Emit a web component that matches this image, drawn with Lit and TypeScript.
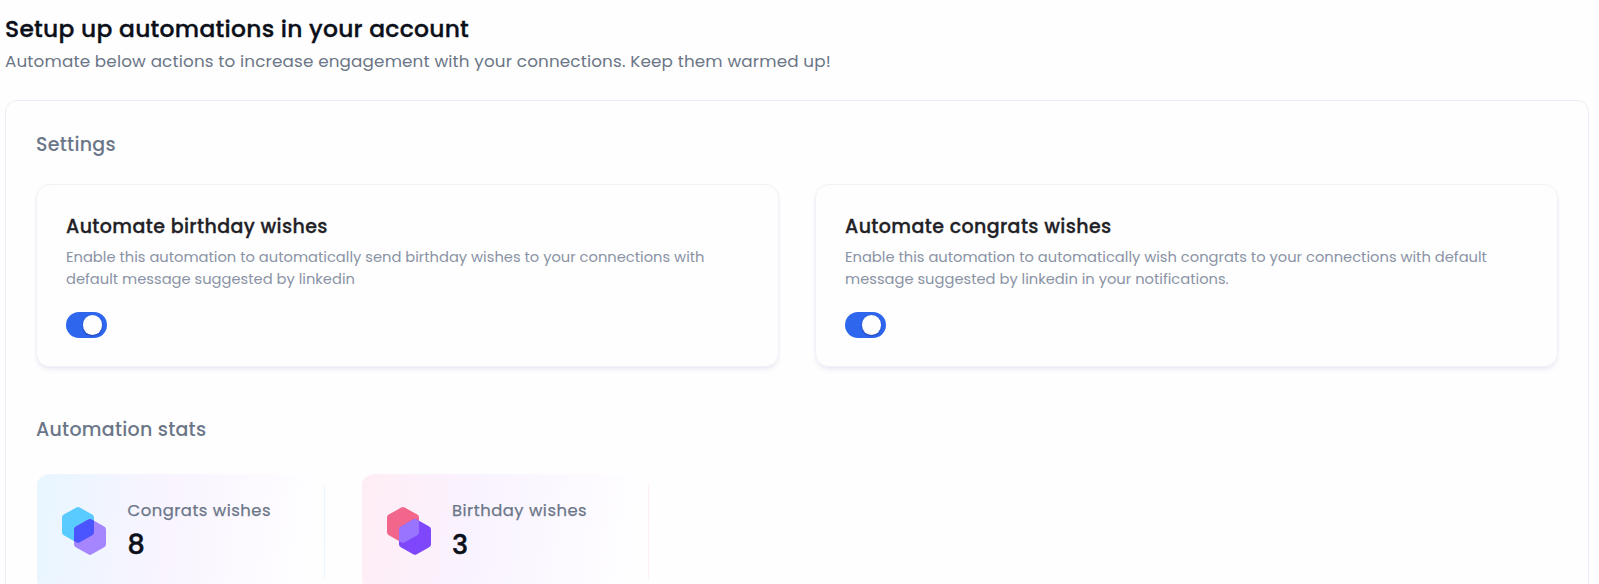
import { LitElement, html, css, svg } from "lit";
import { customElement, property } from "lit/decorators.js";

const HEX =
  "M14.2 .6Q16 -.4 17.8 .6L30.2 7.6Q32 8.6 32 10.6V25.2Q32 27.2 30.2 28.2L17.8 35.2Q16 36.2 14.2 35.2L1.8 28.2Q0 27.2 0 25.2V10.6Q0 8.6 1.8 7.6Z";

@customElement("hex-pair")
class HexPair extends LitElement {
  @property() tone = "sky";
  static styles = css`
    :host { display: block; width: 44px; height: 48px; }
    svg { display: block; }
    .sky .back { fill: #59cbff; }
    .sky .front { fill: #a686ff; }
    .sky .mix { fill: #4a54ff; }
    .rose .back { fill: #f2668b; }
    .rose .front { fill: #7f47fb; }
    .rose .mix { fill: #9974ff; }
  `;
  render() {
    return html`<svg class=${this.tone} width="44" height="48" viewBox="0 0 44 48" aria-hidden="true">
      <defs><clipPath id="c"><path d=${HEX} /></clipPath></defs>
      ${svg`<path class="back" d=${HEX} /><path class="front" d=${HEX} transform="translate(12 12)" />
      <g clip-path="url(#c)"><path class="mix" d=${HEX} transform="translate(12 12)" /></g>`}
    </svg>`;
  }
}

@customElement("toggle-switch")
class ToggleSwitch extends LitElement {
  @property({ type: Boolean }) on = false;
  static styles = css`
    :host { display: flex; }
    .track {
      display: flex; align-items: center; justify-content: flex-start; box-sizing: border-box;
      width: 41px; height: 26px; padding: 0 5px; border: 0; border-radius: 13px;
      background: #cbd5e1; cursor: pointer;
    }
    .track.on { justify-content: flex-end; background: #2f66ee; }
    .knob { width: 19.5px; height: 20px; border-radius: 50%; background: #fefefe; box-shadow: 0 1px 2px rgba(0, 0, 60, .35); }
  `;
  render() {
    return html`<button class="track ${this.on ? "on" : ""}" role="switch" aria-checked=${this.on}
      @click=${() => (this.on = !this.on)}><span class="knob"></span></button>`;
  }
}

const settings = [
  {
    title: "Automate birthday wishes",
    text: "Enable this automation to automatically send birthday wishes to your connections with default message suggested by linkedin",
  },
  {
    title: "Automate congrats wishes",
    text: "Enable this automation to automatically wish congrats to your connections with default message suggested by linkedin in your notifications.",
  },
];

const stats = [
  { tone: "sky", label: "Congrats wishes", value: 8 },
  { tone: "rose", label: "Birthday wishes", value: 3 },
];

@customElement("app-root")
class AppRoot extends LitElement {
  static styles = css`
    :host {
      display: block; box-sizing: border-box; height: 584px; overflow: hidden;
      padding: 11px 10px 0 5px; background: #fefefe;
      font-family: Poppins, Inter, sans-serif; color: #0b0f19;
    }
    h1, h2, h3, p { margin: 0; font-weight: 400; }
    .title {
      font-size: 23.4px; letter-spacing: .28px; line-height: 36px; font-weight: 500;
      -webkit-text-stroke: .35px currentColor;
    }
    .subtitle { margin-top: 1px; font-size: 16.8px; letter-spacing: .15px; line-height: 26px; color: #6b7686; }
    .panel {
      box-sizing: border-box; height: 530px; margin-top: 26px; padding: 31px 30px 0;
      border: 1px solid #eeedf7; border-radius: 12px;
    }
    .section { font-size: 19px; letter-spacing: .26px; line-height: 26px; font-weight: 500; color: #6b7688; }
    .cards { display: grid; grid-template-columns: 1fr 1fr; gap: 36px; margin-top: 26px; }
    .card {
      box-sizing: border-box; height: 183px; padding: 27px 29px 26px; border: 1px solid #f3f1f8; border-radius: 14px;
      box-shadow: 0 4px 5px -1px rgba(90, 60, 160, .08), 0 1px 3px rgba(90, 60, 160, .05);
    }
    .card-title {
      font-size: 19px; letter-spacing: .39px; line-height: 30px; font-weight: 500; color: #212126;
      -webkit-text-stroke: .3px currentColor;
    }
    .card-text { margin: 4px 0 22px; font-size: 14.69px; line-height: 22px; color: #8a93a5; }
    .stats-title { margin-top: 50px; }
    .stats { display: flex; gap: 36px; margin-top: 31px; }
    .stat {
      box-sizing: border-box; display: flex; gap: 21.5px; width: 288.5px; height: 116px;
      padding: 22px 25px; border: 1px solid transparent; border-radius: 14px;
    }
    .stat.sky { background-image: linear-gradient(98deg, #e8f6ff, #f9f4ff 45%, #fefdff 90%, #fefefe); }
    .stat.rose { background-image: linear-gradient(98deg, #ffedf5, #f9f3ff 40%, #fefdff 90%, #fefefe); }
    .stat hex-pair { margin-top: 10px; }
    .label {
      font-size: 16.4px; letter-spacing: .5px; line-height: 27px; color: #6b7688;
      -webkit-text-stroke: .25px currentColor;
    }
    .value { margin-top: 2px; font-size: 27px; line-height: 38px; font-weight: 500; -webkit-text-stroke: .5px currentColor; }
  `;

  render() {
    return html`
      <h1 class="title">Setup up automations in your account</h1>
      <p class="subtitle">Automate below actions to increase engagement with your connections. Keep them warmed up!</p>
      <main class="panel">
        <h2 class="section">Settings</h2>
        <div class="cards">
          ${settings.map((s) => html`<section class="card">
            <h3 class="card-title">${s.title}</h3>
            <p class="card-text">${s.text}</p>
            <toggle-switch on></toggle-switch>
          </section>`)}
        </div>
        <h2 class="section stats-title">Automation stats</h2>
        <div class="stats">
          ${stats.map((s) => html`<section class="stat ${s.tone}">
            <hex-pair tone=${s.tone}></hex-pair>
            <div>
              <p class="label">${s.label}</p>
              <p class="value">${s.value}</p>
            </div>
          </section>`)}
        </div>
      </main>`;
  }
}
